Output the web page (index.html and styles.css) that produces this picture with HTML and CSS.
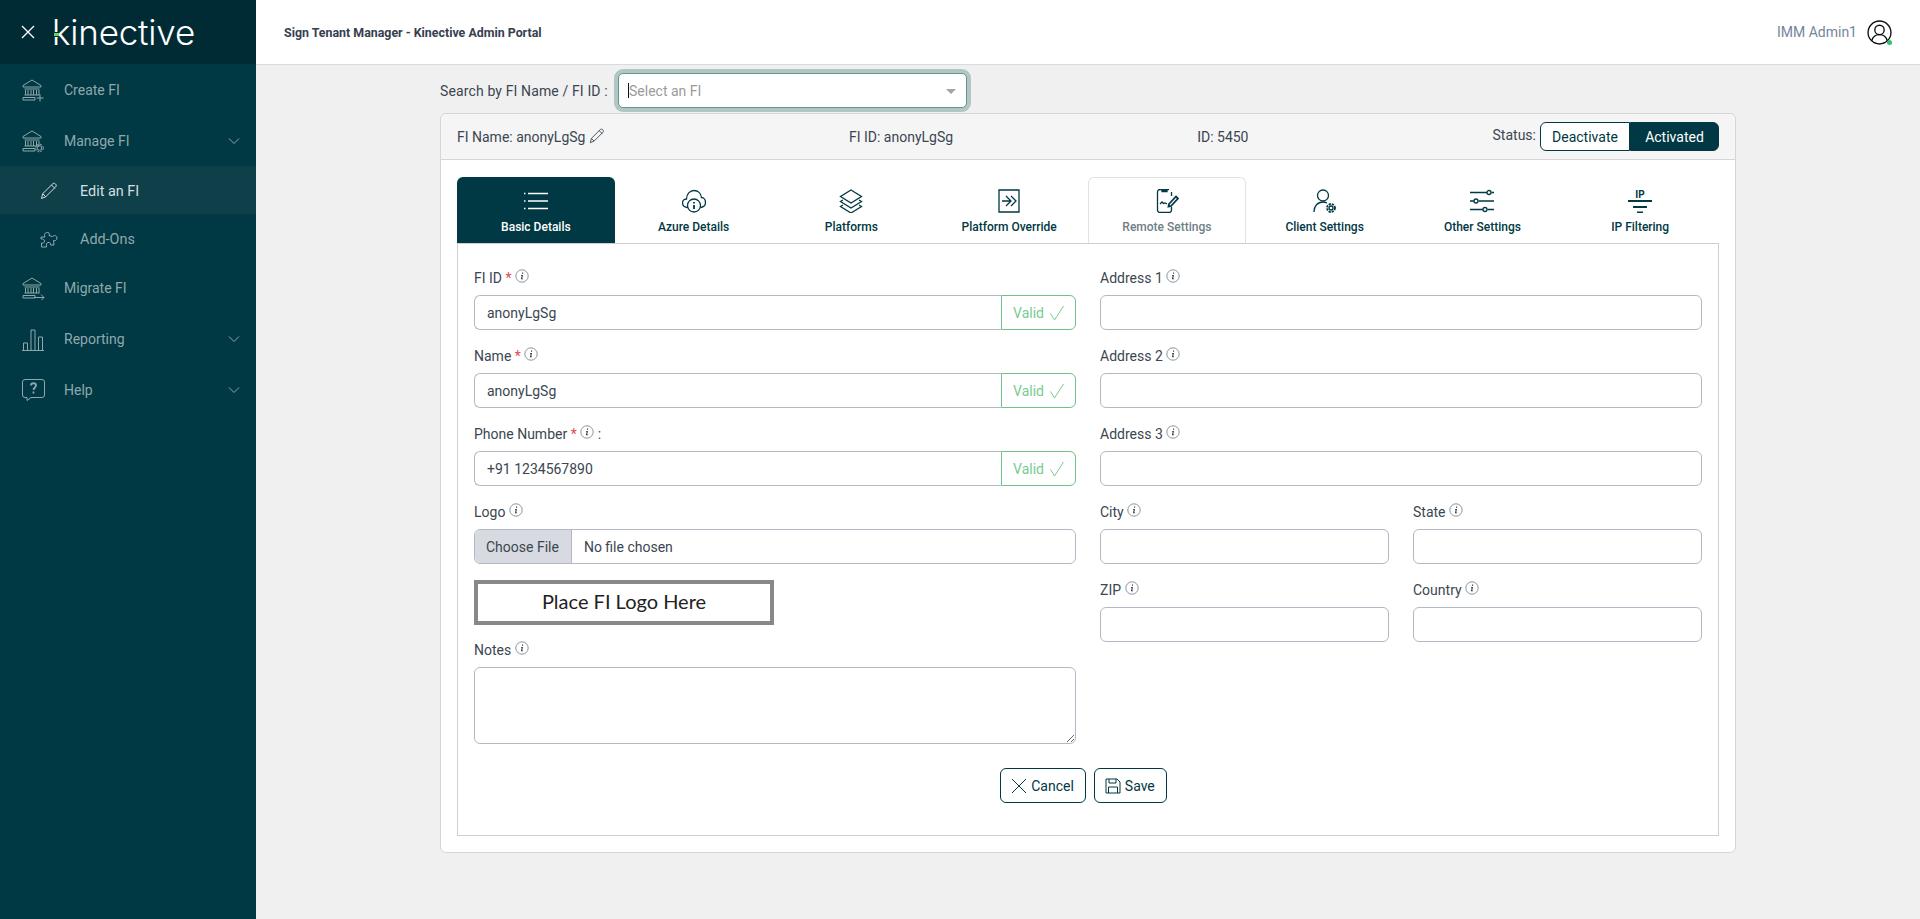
FILE: index.html
```html
<!DOCTYPE html>
<html lang="en">
<head>
    <meta charset="UTF-8">
    <meta name="viewport" content="width=device-width, initial-scale=1.0">
    <title>Sign Tenant Manager - Kinective Admin Portal</title>
    <link rel="stylesheet" href="styles.css">
</head>
<body>
    <svg class="defs" width="0" height="0">
        <symbol id="info" viewBox="0 0 14 14">
            <circle cx="7" cy="7" r="6.2" fill="none" stroke="#7d8a92" stroke-width="0.9"/>
            <path d="M7 3.4h1.1v1.3H7zM6 6h2l-.8 3.6h.9v.7H5.900l.8-3.600H6z" fill="#2f3d48" stroke="none"/>
        </symbol>
        <symbol id="bank" viewBox="0 0 24 24">
            <path d="M2 7.500 11 2l9 5.500V9H2zM3.500 11h15M4.500 12v5M7 12v5M10 12v5M12.500 12v5M15.500 12v5M18 12v5M3.500 17h15M2 19.500h12V22H2z"/>
        </symbol>
        <symbol id="chevron" viewBox="0 0 12 12">
            <path d="M1 3.500 6 8.500l5-5"/>
        </symbol>
        <symbol id="check" viewBox="0 0 16 16">
            <path d="M1.500 8.500l4 6.500L14.500 1"/>
        </symbol>
    </svg>

    <aside class="sidebar">
        <div class="brand">
            <svg class="brand-close" viewBox="0 0 14 14"><path d="M1 1l12 12M13 1 1 13"/></svg>
            <span class="logo">kinective<i class="logo-dot"></i></span>
        </div>
        <nav>
            <a class="nav-item">
                <svg class="nav-icon" viewBox="0 0 24 24"><use href="#bank"/><path d="M19 16.500v7M15.500 20h7"/></svg>
                <span>Create FI</span>
            </a>
            <a class="nav-item">
                <svg class="nav-icon" viewBox="0 0 24 24"><use href="#bank"/><circle cx="18.500" cy="19" r="2.300"/><circle cx="18.500" cy="19" r="3.800" stroke-dasharray="2 1"/></svg>
                <span>Manage FI</span>
                <svg class="chevron"><use href="#chevron"/></svg>
            </a>
            <a class="nav-item sub active">
                <svg class="sub-icon" viewBox="0 0 18 18"><path d="M1.500 16.500l1.200-4.800L12.500 2c1-1 2-1 3 0s1 2 0 3l-9.800 9.800zM2.700 11.700l3 3M11.500 3l3.500 3.500"/></svg>
                <span>Edit an FI</span>
            </a>
            <a class="nav-item sub">
                <svg class="sub-icon" viewBox="0 0 18 18"><path d="M1 7h4c-1-2-.5-4 1.500-4.500S10 3 9 5.500l3.500 1 1-.5c1-1 3.500-.5 3.500 2s-2 3-3.500 2.500L14 15h-3.500c.5-2-1-3-2.500-2.500S6 14 6.500 17H1.500v-4c2 .5 3-.5 3-2S3 8.500 1 9z"/></svg>
                <span>Add-Ons</span>
            </a>
            <a class="nav-item">
                <svg class="nav-icon" viewBox="0 0 24 24"><use href="#bank"/><path d="M13 21.500h10M20 18.500l3 3-3 3"/></svg>
                <span>Migrate FI</span>
            </a>
            <a class="nav-item">
                <svg class="nav-icon" viewBox="0 0 24 24"><path d="M1 23.500h22M2.500 23v-7h4v7M10 23V3h4v20M17.500 23V10h4v13"/></svg>
                <span>Reporting</span>
                <svg class="chevron"><use href="#chevron"/></svg>
            </a>
            <a class="nav-item">
                <svg class="nav-icon" viewBox="0 0 24 24"><path d="M4 1.500h17a2.500 2.500 0 0 1 2.500 2.500v13a2.500 2.500 0 0 1-2.500 2.500H10L6 22.500v-3H4A2.500 2.500 0 0 1 1.500 17V4A2.500 2.500 0 0 1 4 1.500z"/><path class="bold" d="M10 7.500c0-3 5-3 5 0 0 2-2.500 2-2.500 4.500M12.500 13.500v2"/></svg>
                <span>Help</span>
                <svg class="chevron"><use href="#chevron"/></svg>
            </a>
        </nav>
    </aside>

    <div class="main">
        <header class="topbar">
            <div class="page-title">Sign Tenant Manager - Kinective Admin Portal</div>
            <div class="user">
                <span>IMM Admin1</span>
                <span class="avatar">
                    <svg viewBox="0 0 24 24"><circle cx="12" cy="12" r="11"/><circle cx="12" cy="9.500" r="4.500"/><path d="M4.500 20c1-4 4-6 7.500-6s6.500 2 7.500 6"/></svg>
                    <i class="online"></i>
                </span>
            </div>
        </header>

        <div class="content">
            <div class="search-row">
                <label class="search-label">Search by FI Name / FI ID :</label>
                <div class="select">
                    <span class="caret"></span>
                    <span class="select-text">Select an FI</span>
                    <span class="select-arrow"></span>
                </div>
            </div>

            <section class="card">
                <div class="card-head">
                    <div class="head-item">FI Name: anonyLgSg
                        <svg class="head-pencil" viewBox="0 0 18 18"><path d="M1.500 16.500l1.200-4.800L12.500 2c1-1 2-1 3 0s1 2 0 3l-9.800 9.800zM2.700 11.700l3 3M11.500 3l3.500 3.500"/></svg>
                    </div>
                    <div class="head-item">FI ID: anonyLgSg</div>
                    <div class="head-item">ID: 5450</div>
                    <div class="status">
                        <span class="status-label">Status:</span>
                        <div class="toggle">
                            <button class="toggle-off">Deactivate</button>
                            <button class="toggle-on">Activated</button>
                        </div>
                    </div>
                </div>

                <div class="card-body">
                    <div class="tabs">
                        <div class="tab selected">
                            <svg viewBox="0 0 24 24"><path d="M4 4.500h20M4 12h20M4 19.500h20M0 4.500h1.500M0 12h1.500M0 19.500h1.500"/></svg>
                            <span>Basic Details</span>
                        </div>
                        <div class="tab">
                            <svg viewBox="0 0 24 24"><path d="M6 18.500C2.500 18.500.5 16.500.5 14c0-2.500 2-4 4-4 0-5 3.500-8.500 7.500-8.500s7 3 7.500 7c2.500 0 4 2.500 4 5 0 2.500-2 4.500-5 5"/><circle cx="12" cy="16.500" r="6.500"/><path class="bold" d="M12 13v1.500M12 16v4"/></svg>
                            <span>Azure Details</span>
                        </div>
                        <div class="tab">
                            <svg viewBox="0 0 24 24"><path d="M12 1 22.500 7.500 12 14 1.500 7.500zM4 11 1.500 12.500 12 19l10.500-6.500L20 11M4 16l-2.500 1.500L12 24l10.500-6.500L20 16"/></svg>
                            <span>Platforms</span>
                        </div>
                        <div class="tab">
                            <svg viewBox="0 0 24 24"><path d="M2 1h20v22H2zM5 12h9M9 7l5 5-5 5M14 7l5 5-5 5"/></svg>
                            <span>Platform Override</span>
                        </div>
                        <div class="tab remote">
                            <svg viewBox="0 0 24 24"><path d="M14 .500H5a2.500 2.500 0 0 0-2.500 2.500v18A2.500 2.500 0 0 0 5 23.500h9a2.500 2.500 0 0 0 2.500-2.500v-3M16.500 3V7M7 1h5v1.500H7zM5 15l2-2 1.500 1.500 1.500-.5 2 1"/><path class="bold" d="M14 15l7-7.500 2 2-7 7.500-2.500.5z"/></svg>
                            <span>Remote Settings</span>
                        </div>
                        <div class="tab">
                            <svg viewBox="0 0 24 24"><circle cx="10" cy="6.500" r="5.500"/><path d="M1 23c0-6 3.500-10 9-10 1.500 0 3 .5 4 1"/><circle cx="18" cy="19" r="2"/><circle class="bold" cx="18" cy="19" r="4" stroke-dasharray="2.200 1"/></svg>
                            <span>Client Settings</span>
                        </div>
                        <div class="tab">
                            <svg viewBox="0 0 24 24"><path d="M0 3.500h17M21.500 3.500H24M0 12h4M8.500 12H24M0 20.500h13M17.500 20.500H24"/><circle cx="19" cy="3.500" r="2"/><circle cx="6" cy="12" r="2"/><circle cx="15" cy="20.500" r="2"/></svg>
                            <span>Other Settings</span>
                        </div>
                        <div class="tab">
                            <svg viewBox="0 0 24 24"><text class="ip-text" x="12" y="8.500">IP</text><path class="bold" d="M0 12h24M5 18h14M9 23.500h6"/></svg>
                            <span>IP Filtering</span>
                        </div>
                    </div>

                    <div class="panel">
                        <div class="form-grid">
                            <div class="col">
                                <div class="field">
                                    <label>FI ID <em>*</em> <svg class="info"><use href="#info"/></svg></label>
                                    <div class="input-group">
                                        <input type="text" value="anonyLgSg">
                                        <span class="valid">Valid <svg><use href="#check"/></svg></span>
                                    </div>
                                </div>
                                <div class="field">
                                    <label>Name <em>*</em> <svg class="info"><use href="#info"/></svg></label>
                                    <div class="input-group">
                                        <input type="text" value="anonyLgSg">
                                        <span class="valid">Valid <svg><use href="#check"/></svg></span>
                                    </div>
                                </div>
                                <div class="field">
                                    <label>Phone Number <em>*</em> <svg class="info"><use href="#info"/></svg> :</label>
                                    <div class="input-group">
                                        <input type="text" value="+91 1234567890">
                                        <span class="valid">Valid <svg><use href="#check"/></svg></span>
                                    </div>
                                </div>
                                <div class="field logo-field">
                                    <label>Logo <svg class="info"><use href="#info"/></svg></label>
                                    <input type="file" class="file-input">
                                </div>
                                <div class="logo-box">Place FI Logo Here</div>
                                <div class="field notes-field">
                                    <label>Notes <svg class="info"><use href="#info"/></svg></label>
                                    <textarea></textarea>
                                </div>
                            </div>
                            <div class="col">
                                <div class="field">
                                    <label>Address 1 <svg class="info"><use href="#info"/></svg></label>
                                    <input type="text">
                                </div>
                                <div class="field">
                                    <label>Address 2 <svg class="info"><use href="#info"/></svg></label>
                                    <input type="text">
                                </div>
                                <div class="field">
                                    <label>Address 3 <svg class="info"><use href="#info"/></svg></label>
                                    <input type="text">
                                </div>
                                <div class="split">
                                    <div class="field">
                                        <label>City <svg class="info"><use href="#info"/></svg></label>
                                        <input type="text">
                                    </div>
                                    <div class="field">
                                        <label>State <svg class="info"><use href="#info"/></svg></label>
                                        <input type="text">
                                    </div>
                                    <div class="field">
                                        <label>ZIP <svg class="info"><use href="#info"/></svg></label>
                                        <input type="text">
                                    </div>
                                    <div class="field">
                                        <label>Country <svg class="info"><use href="#info"/></svg></label>
                                        <input type="text">
                                    </div>
                                </div>
                            </div>
                        </div>
                        <div class="actions">
                            <button class="btn">
                                <svg viewBox="0 0 16 16"><path d="M1 1l14 14M15 1 1 15"/></svg>Cancel
                            </button>
                            <button class="btn">
                                <svg viewBox="0 0 16 16"><path d="M1 1h11l3 3v11H1zM4 1v4h7V1M3.500 15V9h9v6"/></svg>Save
                            </button>
                        </div>
                    </div>
                </div>
            </section>
        </div>
    </div>
</body>
</html>
```

FILE: styles.css
```css
* {
    margin: 0;
    padding: 0;
    box-sizing: border-box;
}

body {
    display: flex;
    height: 100vh;
    overflow: hidden;
    font-family: Roboto, "Liberation Sans", sans-serif;
    font-size: 14px;
    color: #3b4651;
    background: #f0f0f0;
}

.defs {
    position: absolute;
}

svg {
    fill: none;
    stroke: currentColor;
    stroke-width: 1;
}

/* sidebar */
.sidebar {
    width: 256px;
    flex-shrink: 0;
    background: #003843;
    color: #8fa8ac;
}

.brand {
    height: 64px;
    display: flex;
    align-items: center;
    background: #002b35;
    padding-left: 21px;
}

.brand-close {
    width: 14px;
    height: 14px;
    color: #fff;
    stroke-width: 1.300;
}

.logo {
    position: relative;
    margin-left: 17px;
    font-family: Inter, sans-serif;
    font-weight: 300;
    font-size: 35px;
    line-height: 40px;
    letter-spacing: -0.2px;
    color: #fff;
}

.logo-dot {
    position: absolute;
    left: 2px;
    top: 20px;
    width: 5px;
    height: 5px;
    background: #6cd05f;
    border-top: 1px solid #002b35;
    border-bottom: 1px solid #002b35;
}

.nav-item {
    position: relative;
    height: 51px;
    display: flex;
    align-items: center;
    padding-left: 21px;
}

.nav-item.sub {
    height: 48px;
    padding: 2px 0 0 40px;
    font-size: 14.4px;
}

.nav-item.active {
    background: #0f3f48;
    color: #d4dfe0;
}

.nav-icon {
    width: 24px;
    height: 24px;
    margin-right: 19px;
}

.sub-icon {
    width: 18px;
    height: 18px;
    margin-right: 22px;
}

.chevron {
    position: absolute;
    right: 16px;
    top: 20px;
    width: 12px;
    height: 12px;
}

/* top bar */
.main {
    flex: 1;
    min-width: 0;
}

.topbar {
    height: 65px;
    display: flex;
    align-items: center;
    justify-content: space-between;
    background: #fff;
    border-bottom: 1px solid #d9dbe0;
    padding: 0 28px 0 28px;
}

.page-title {
    font-size: 12.4px;
    font-weight: 700;
    color: #364050;
}

.user {
    display: flex;
    align-items: center;
    gap: 10px;
    color: #73869b;
}

.avatar {
    position: relative;
    width: 25px;
    height: 25px;
    color: #111;
}

.avatar svg {
    display: block;
    width: 25px;
    height: 25px;
    stroke-width: 1.300;
}

.online {
    position: absolute;
    right: 0;
    bottom: 0;
    width: 5px;
    height: 5px;
    border-radius: 50%;
    background: #2fc36b;
}

/* content */
.content {
    padding: 8px 184px 0;
}

.search-row {
    display: flex;
    align-items: center;
    height: 35px;
    margin-bottom: 5px;
}

.search-label {
    width: 178px;
    letter-spacing: 0.13px;
}

.select {
    width: 349px;
    height: 35px;
    display: flex;
    align-items: center;
    background: #fff;
    border: 1px solid #5e9a86;
    border-radius: 5px;
    box-shadow: 0 0 0 4px #b3c6c5;
    padding-left: 9px;
    position: relative;
}

.caret {
    width: 1px;
    height: 15px;
    background: #111;
}

.select-text {
    color: #9b9b9b;
}

.select-arrow {
    position: absolute;
    right: 10px;
    top: 15px;
    border-left: 5px solid transparent;
    border-right: 5px solid transparent;
    border-top: 5px solid #a3a3a3;
}

.card {
    background: #fff;
    border: 1px solid #d5d5d5;
    border-radius: 6px;
}

.card-head {
    display: flex;
    align-items: center;
    justify-content: space-between;
    padding: 8px 16px;
    background: #f5f5f5;
    border-bottom: 1px solid #d5d5d5;
    border-radius: 6px 6px 0 0;
}

.head-pencil {
    width: 16px;
    height: 16px;
    vertical-align: -2px;
}

.status {
    display: flex;
    align-items: center;
    gap: 4px;
}

.status-label {
    margin-top: -4px;
}

.toggle {
    display: flex;
}

.toggle button {
    height: 29px;
    font-family: inherit;
    font-size: 14px;
    border: 1px solid #003843;
}

.toggle-off {
    width: 90px;
    background: #fff;
    color: #003843;
    border-radius: 6px 0 0 6px;
}

.toggle-on {
    width: 89px;
    background: #003843;
    color: #fff;
    border-radius: 0 6px 6px 0;
}

.card-body {
    padding: 17px 16px 16px;
}

/* tabs */
.tabs {
    display: grid;
    grid-template-columns: repeat(8, 1fr);
    height: 66px;
}

.tab {
    display: flex;
    flex-direction: column;
    align-items: center;
    padding-top: 11px;
    color: #003843;
    font-size: 12px;
    font-weight: 500;
    border: 1px solid transparent;
    border-bottom: 0;
    border-radius: 6px 6px 0 0;
}

.tab svg {
    width: 24px;
    height: 24px;
    margin-bottom: 6px;
    stroke-width: 1.300;
}

.tab span {
    line-height: 16px;
}

.tab.selected {
    background: #003843;
    color: #fff;
}

.tab.remote {
    border-color: #e2e2e2;
    color: #6f7e85;
}

.tab.remote svg {
    color: #003843;
}

.bold {
    stroke-width: 1.800;
}

.ip-text {
    font-family: Roboto, sans-serif;
    font-size: 10px;
    font-weight: 700;
    text-anchor: middle;
    fill: currentColor;
    stroke: none;
}

.panel {
    border: 1px solid #cfcfcf;
    padding: 22px 16px 32px;
}

.form-grid {
    display: grid;
    grid-template-columns: 1fr 1fr;
    column-gap: 24px;
}

.split {
    display: grid;
    grid-template-columns: 1fr 1fr;
    column-gap: 24px;
}

.field {
    margin-bottom: 14px;
}

.field label {
    display: block;
    height: 24px;
    line-height: 24px;
    margin-bottom: 5px;
}

.field em {
    font-style: normal;
    color: #e5484d;
}

.info {
    width: 14px;
    height: 14px;
    vertical-align: 0;
}

input[type="text"],
textarea {
    display: block;
    width: 100%;
    height: 35px;
    border: 1px solid #b5b7c4;
    border-radius: 6px;
    padding: 0 12px;
    font-family: inherit;
    font-size: 14px;
    color: #3b4651;
    background: #fff;
}

.input-group {
    display: flex;
}

.input-group input[type="text"] {
    flex: 1;
    min-width: 0;
    border-right: 0;
    border-radius: 6px 0 0 6px;
}

.valid {
    width: 75px;
    display: flex;
    align-items: center;
    justify-content: center;
    gap: 5px;
    padding-left: 1px;
    color: #78cb92;
    border: 1px solid #6fc28b;
    border-radius: 0 6px 6px 0;
}

.valid svg {
    width: 16px;
    height: 16px;
}

.file-input {
    display: block;
    width: 100%;
    height: 35px;
    font-family: inherit;
    font-size: 14px;
    color: #3b4651;
    background: #fff;
    border: 1px solid #b5b7c4;
    border-radius: 6px;
    overflow: hidden;
}

.file-input::file-selector-button {
    height: 35px;
    margin: -1px 12px 0 -1px;
    padding: 0 12px;
    font-family: inherit;
    font-size: 14px;
    color: #3b4651;
    background: #d7dae0;
    border: 0;
    border-right: 1px solid #b5b7c4;
}

.logo-field {
    margin-bottom: 16px;
}

.logo-box {
    width: 300px;
    height: 45px;
    display: flex;
    align-items: center;
    justify-content: center;
    border: 4px solid #888;
    padding-bottom: 3px;
    font-family: Lato, sans-serif;
    font-size: 20px;
    color: #222;
    margin-bottom: 13px;
}

.notes-field {
    margin-bottom: 0;
}

.notes-field textarea {
    height: 77px;
    padding: 8px 12px;
}

.actions {
    display: flex;
    justify-content: center;
    gap: 8px;
    margin-top: 24px;
    padding-right: 9px;
}

.btn {
    height: 35px;
    display: flex;
    align-items: center;
    gap: 4px;
    padding: 0 11px 0 10px;
    font-family: inherit;
    font-size: 14px;
    color: #003843;
    background: #fff;
    border: 1px solid #003843;
    border-radius: 6px;
}

.btn svg {
    width: 16px;
    height: 16px;
}
```
